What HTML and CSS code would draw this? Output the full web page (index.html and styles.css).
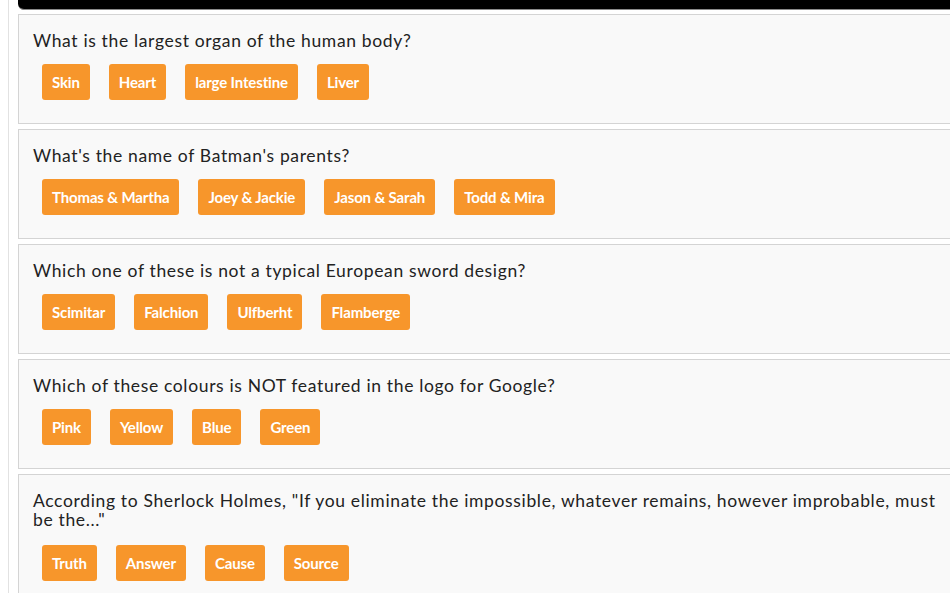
FILE: index.html
```html
<!DOCTYPE html>
<html lang="en">
<head>
<meta charset="utf-8">
<title>Quiz</title>
<link rel="stylesheet" href="styles.css">
</head>
<body>
<div class="page">
  <div class="topbar"></div>
  <div class="quiz">
    <section class="card">
      <p class="question">What is the largest organ of the human body?</p>
      <div class="answers">
        <button class="answer">Skin</button>
        <button class="answer">Heart</button>
        <button class="answer">large Intestine</button>
        <button class="answer">Liver</button>
      </div>
    </section>
    <section class="card">
      <p class="question">What's the name of Batman's parents?</p>
      <div class="answers">
        <button class="answer">Thomas &amp; Martha</button>
        <button class="answer">Joey &amp; Jackie</button>
        <button class="answer">Jason &amp; Sarah</button>
        <button class="answer">Todd &amp; Mira</button>
      </div>
    </section>
    <section class="card">
      <p class="question">Which one of these is not a typical European sword design?</p>
      <div class="answers">
        <button class="answer">Scimitar</button>
        <button class="answer">Falchion</button>
        <button class="answer">Ulfberht</button>
        <button class="answer">Flamberge</button>
      </div>
    </section>
    <section class="card">
      <p class="question">Which of these colours is NOT featured in the logo for Google?</p>
      <div class="answers">
        <button class="answer">Pink</button>
        <button class="answer">Yellow</button>
        <button class="answer">Blue</button>
        <button class="answer">Green</button>
      </div>
    </section>
    <section class="card">
      <p class="question">According to Sherlock Holmes, "If you eliminate the impossible, whatever remains, however improbable, must be the..."</p>
      <div class="answers">
        <button class="answer">Truth</button>
        <button class="answer">Answer</button>
        <button class="answer">Cause</button>
        <button class="answer">Source</button>
      </div>
    </section>
  </div>
</div>
</body>
</html>
```

FILE: styles.css
```css
html, body {
  margin: 0;
  padding: 0;
  background: #ffffff;
  overflow: hidden;
}
body {
  font-family: Lato, "Open Sans", sans-serif;
  color: #222;
}
.page {
  margin-left: 8px;
  border-left: 1px solid #e2e2e2;
  padding-left: 9px;
  width: 1000px;
  min-height: 593px;
}
.topbar {
  height: 9px;
  background: #000;
  border-bottom: 1px solid #8a8a8a;
  border-bottom-left-radius: 6px;
}
.quiz {
  padding-top: 4px;
  display: flex;
  flex-direction: column;
  gap: 5px;
}
.card {
  width: 950px;
  height: 108px;
  box-sizing: content-box;
  border: 1px solid #d4d4d4;
  background: #f9f9f9;
  padding: 0 14px;
}
.card:last-child {
  height: 130px;
}
.question {
  margin: 16px 0 0;
  font-size: 17.5px;
  letter-spacing: 0.65px;
  line-height: 19px;
  width: 912px;
}
.answers {
  display: flex;
  gap: 19px;
  padding-left: 9px;
  margin-top: 14px;
}
.card:last-child .answers {
  margin-top: 16px;
}
.answer {
  font-family: Lato, "Open Sans", sans-serif;
  font-size: 15px;
  font-weight: 700;
  letter-spacing: -0.15px;
  color: #fff;
  background: #f7962b;
  border: none;
  border-radius: 3px;
  height: 36px;
  padding: 0 10px;
}
```
